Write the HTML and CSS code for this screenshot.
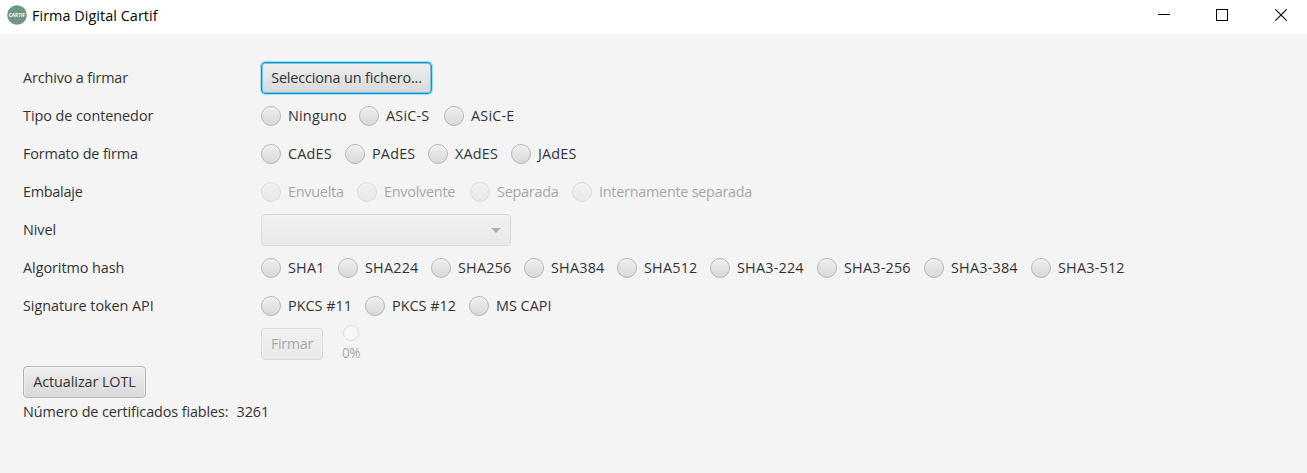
FILE: index.html
```html
<!DOCTYPE html>
<html lang="es">
<head>
<meta charset="utf-8">
<title>Firma Digital Cartif</title>
<link rel="stylesheet" href="styles.css">
</head>
<body>
<header class="titlebar">
  <svg class="logo" width="20" height="20" viewBox="0 0 20 20"><circle cx="10" cy="10" r="9.8" fill="#6d9785"/><text class="logo-text" x="10" y="12.2" text-anchor="middle" textLength="16.5" lengthAdjust="spacingAndGlyphs">CARTIF</text></svg>
  <h1 class="title">Firma Digital Cartif</h1>
  <nav class="controls">
    <svg width="12" height="12" shape-rendering="crispEdges"><path d="M0 5.5H12" stroke="#000"/></svg>
    <svg width="12" height="12" shape-rendering="crispEdges"><path d="M.5 .5H11.5V11.5H.5Z" fill="none" stroke="#000"/></svg>
    <svg width="12" height="12"><path d="M.3 .3L11.7 11.7M11.7 .3L.3 11.7" stroke="#000" stroke-width="1.1"/></svg>
  </nav>
</header>
<main class="form">
  <div class="row"><span class="label l-file">Archivo a firmar</span><button class="button focused"><span>Selecciona un fichero...</span></button></div>
  <div class="row"><span class="label l-type">Tipo de contenedor</span>
    <div class="options container-type"><label class="option"><i class="radio"></i><span>Ninguno</span></label><label class="option"><i class="radio"></i><span>ASiC-S</span></label><label class="option"><i class="radio"></i><span>ASiC-E</span></label></div></div>
  <div class="row"><span class="label l-format">Formato de firma</span>
    <div class="options format"><label class="option"><i class="radio"></i><span>CAdES</span></label><label class="option"><i class="radio"></i><span>PAdES</span></label><label class="option"><i class="radio"></i><span>XAdES</span></label><label class="option"><i class="radio"></i><span>JAdES</span></label></div></div>
  <div class="row"><span class="label l-pack">Embalaje</span>
    <div class="options packaging disabled"><label class="option"><i class="radio"></i><span>Envuelta</span></label><label class="option"><i class="radio"></i><span>Envolvente</span></label><label class="option"><i class="radio"></i><span>Separada</span></label><label class="option"><i class="radio"></i><span>Internamente separada</span></label></div></div>
  <div class="row"><span class="label l-level">Nivel</span>
    <div class="combo disabled"><svg width="10" height="5"><path d="M0 0H10L5 5Z" fill="#4a4a4a"/></svg></div></div>
  <div class="row"><span class="label l-hash">Algoritmo hash</span>
    <div class="options hash"><label class="option"><i class="radio"></i><span>SHA1</span></label><label class="option"><i class="radio"></i><span>SHA224</span></label><label class="option"><i class="radio"></i><span>SHA256</span></label><label class="option"><i class="radio"></i><span>SHA384</span></label><label class="option"><i class="radio"></i><span>SHA512</span></label><label class="option"><i class="radio"></i><span>SHA3-224</span></label><label class="option"><i class="radio"></i><span>SHA3-256</span></label><label class="option"><i class="radio"></i><span>SHA3-384</span></label><label class="option"><i class="radio"></i><span>SHA3-512</span></label></div></div>
  <div class="row"><span class="label l-token">Signature token API</span>
    <div class="options token"><label class="option"><i class="radio"></i><span>PKCS #11</span></label><label class="option"><i class="radio"></i><span>PKCS #12</span></label><label class="option"><i class="radio"></i><span>MS CAPI</span></label></div></div>
  <div class="row"><span></span>
    <div class="actions"><button class="button sign disabled"><span>Firmar</span></button><div class="progress disabled"><i class="ring"></i><span class="percent">0%</span></div></div></div>
  <button class="button update"><span>Actualizar LOTL</span></button>
  <p class="status"><span class="status-label">Número de certificados fiables:</span><span class="count">3261</span></p>
</main>
</body>
</html>
```
FILE: styles.css
```css
* { box-sizing: border-box; }
body {
  margin: 0;
  height: 473px;
  overflow: hidden;
  background: #f4f4f4;
  color: #333;
  font: 14.4px/20px "Open Sans", "Noto Sans", sans-serif;
  white-space: nowrap;
}
.titlebar {
  display: flex;
  align-items: center;
  height: 34px;
  padding: 0 20px 4px 7px;
  background: #fff;
  color: #000;
}
.logo { overflow: visible; }
.logo-text { font: bold 5.4px "Open Sans", sans-serif; letter-spacing: 0; fill: #fff; }
.title { margin: 2px 0 0 5px; font-size: 14.4px; font-weight: 400; letter-spacing: 0.05px; }
.controls { display: flex; gap: 46px; margin-left: auto; }
.controls svg { display: block; }
.controls svg:last-child { margin-left: 1px; }
.form { display: flex; flex-direction: column; align-items: flex-start; gap: 6px; padding: 28px 23px; }
.row { display: grid; grid-template-columns: 238px auto; align-items: center; height: 32px; }
.label { letter-spacing: -0.05px; }
.l-file, .l-format { letter-spacing: -0.14px; }
.l-pack { letter-spacing: -0.25px; }
.button {
  display: flex;
  align-items: center;
  justify-content: center;
  height: 32px;
  padding: 0;
  border: 1px solid #b5b5b5;
  border-radius: 4px;
  background: linear-gradient(#efefef, #d9d9d9);
  box-shadow: inset 0 1px #f8f8f8, inset 1px 0 #eee, inset -1px 0 #eee;
  color: #333;
  font: inherit;
}
.focused { width: 171px; border-color: #039ed3; box-shadow: 0 0 0 1px #a5dced, inset 0 0 0 1px #70c4df; letter-spacing: -0.13px; }
.update { width: 123px; letter-spacing: -0.08px; }
.sign { width: 62px; letter-spacing: -0.35px; }
.disabled { opacity: .4; }
.options { display: grid; }
.container-type { grid-template-columns: 98px 85px auto; letter-spacing: 0.2px; }
.format { grid-template-columns: 84px 83px 83px auto; letter-spacing: 0.2px; }
.packaging { grid-template-columns: 96px 113px 102px auto; letter-spacing: -0.25px; }
.hash { grid-template-columns: 77px repeat(4, 93px) repeat(3, 107px) auto; letter-spacing: 0.2px; }
.token { grid-template-columns: 104px 104px auto; letter-spacing: 0; }
.option { display: flex; align-items: center; gap: 7px; }
.radio {
  width: 20px;
  height: 20px;
  border: 1px solid #b5b5b5;
  border-radius: 50%;
  background: linear-gradient(#efefef, #d9d9d9);
  box-shadow: inset 0 1px #f8f8f8;
}
.combo {
  display: flex;
  align-items: center;
  justify-content: flex-end;
  width: 250px;
  height: 32px;
  padding-right: 9px;
  border: 1px solid #b5b5b5;
  border-radius: 4px;
  background: linear-gradient(#efefef, #d9d9d9);
}
.actions { display: flex; gap: 18px; }
.progress { display: flex; flex-direction: column; align-items: center; width: 20px; margin-top: -3px; }
.ring { width: 16px; height: 16px; border: 1.5px solid #bbb; border-radius: 50%; background: #fff; }
.percent { margin-top: 2px; font-size: 13.6px; letter-spacing: -0.4px; }
.status { display: flex; gap: 8px; margin: 0; line-height: 16px; letter-spacing: -0.1px; }
```
